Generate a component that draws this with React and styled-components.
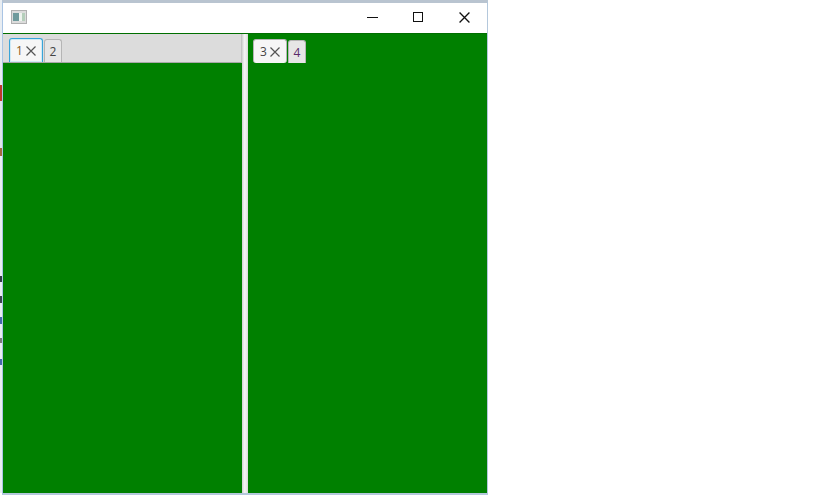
import React from "react";
import styled, { createGlobalStyle } from "styled-components";

const Global = createGlobalStyle`
  html, body { margin: 0; padding: 0; background: #fff; }
  body { font-family: "Open Sans", "Liberation Sans", sans-serif; }
`;

const Page = styled.div`
  width: 819px;
  height: 495px;
  display: flex;
  overflow: hidden;
  background: #fff;
`;

const Sliver = styled.div`
  width: 2px;
  height: 493px;
  display: flex;
  flex-direction: column;
  background: #e8edf2;
`;

const Spot = styled.div`
  height: ${(p) => p.$h}px;
  background: ${(p) => p.$c};
`;

const Win = styled.div`
  width: 486px;
  height: 495px;
  display: flex;
  flex-direction: column;
  box-sizing: border-box;
  border: 1px solid #b4c8dc;
  border-top: 3px solid #b9c4d0;
  border-left-color: #a9c4e4;
  border-bottom-width: 2px;
`;

const TitleBar = styled.div`
  height: 30px;
  box-sizing: border-box;
  flex: none;
  display: flex;
  align-items: center;
  justify-content: space-between;
  background: #fff;
  padding: 0 0 2px 8px;
`;

const WinButtons = styled.div`
  display: flex;
`;

const WinButton = styled.div`
  width: 46px;
  height: 28px;
  display: flex;
  align-items: center;
  justify-content: center;
`;

const Body = styled.div`
  flex: 1;
  display: flex;
  background: #008000;
  border-top: 1px solid #006f00;
`;

const LeftPane = styled.div`
  width: 239px;
  display: flex;
  flex-direction: column;
`;

const Header = styled.div`
  height: 29px;
  box-sizing: border-box;
  display: flex;
  align-items: flex-end;
  gap: 1px;
  padding-left: ${(p) => (p.$clear ? 5 : 6)}px;
  background: ${(p) => (p.$clear ? "transparent" : "#dcdcdc")};
  border-bottom: ${(p) => (p.$clear ? "0" : "1px solid #a8a8a8")};
  border-right: ${(p) => (p.$clear ? "0" : "1px solid #c4c4c4")};
`;

const Tab = styled.div`
  width: ${(p) => (p.$active ? 34 : 18)}px;
  height: ${(p) => (p.$active ? 24 : 23)}px;
  box-sizing: border-box;
  display: flex;
  align-items: center;
  justify-content: center;
  gap: 3px;
  font-size: 12px;
  color: ${(p) => p.$ink};
  background: ${(p) => (p.$active ? "#f6f6f6" : "#e6e6e6")};
  border: 1px solid ${(p) => (p.$focus ? "#39a4d8" : "#b5b5b5")};
  border-bottom: 0;
  border-radius: ${(p) => (p.$round ? "3px" : "3px 3px 0 0")};
  box-shadow: ${(p) => (p.$focus ? "inset 0 0 0 1px #cfeaf6" : "none")};
`;

const Divider = styled.div`
  width: 6px;
  background: linear-gradient(90deg, #cfcfcf, #f4f4f4 40%, #ececec 70%, #d8d8d8);
`;

const RightPane = styled.div`
  flex: 1;
`;

function AppIcon() {
  return (
    <svg width="16" height="14" viewBox="0 0 16 14">
      <rect x="0.5" y="0.5" width="15" height="13" fill="#dcdcdc" stroke="#b0b0b0" />
      <rect x="2" y="3" width="6" height="8" fill="#6f9a9c" />
      <rect x="8" y="3" width="3" height="8" fill="#eef3ee" />
      <rect x="11" y="3" width="3" height="8" fill="#b5cfbb" />
    </svg>
  );
}

function Close({ size = 10, color = "#555" }) {
  return (
    <svg width={size} height={size} viewBox="0 0 10 10">
      <path d="M0.5 0.5 9.5 9.5M9.5 0.5 0.5 9.5" stroke={color} strokeWidth="1.2" fill="none" />
    </svg>
  );
}

export default function App() {
  return (
    <Page>
      <Global />
      <Sliver>
        <Spot $h={85} $c="#e8edf2" />
        <Spot $h={16} $c="#c0392b" />
        <Spot $h={47} $c="#dfe5ea" />
        <Spot $h={8} $c="#a5673f" />
        <Spot $h={120} $c="#e8edf2" />
        <Spot $h={6} $c="#333b45" />
        <Spot $h={14} $c="#e8edf2" />
        <Spot $h={7} $c="#3c4450" />
        <Spot $h={14} $c="#e8edf2" />
        <Spot $h={7} $c="#4468a8" />
        <Spot $h={14} $c="#e8edf2" />
        <Spot $h={5} $c="#7a7a7a" />
        <Spot $h={16} $c="#e8edf2" />
        <Spot $h={6} $c="#4468a8" />
      </Sliver>
      <Win>
        <TitleBar>
          <AppIcon />
          <WinButtons>
            <WinButton>
              <svg width="11" height="11" viewBox="0 0 11 11">
                <path d="M0 5.5H11" stroke="#111" fill="none" />
              </svg>
            </WinButton>
            <WinButton>
              <svg width="10" height="10" viewBox="0 0 10 10">
                <rect x="0.5" y="0.5" width="9" height="9" stroke="#111" fill="none" />
              </svg>
            </WinButton>
            <WinButton>
              <Close size={11} color="#111" />
            </WinButton>
          </WinButtons>
        </TitleBar>
        <Body>
          <LeftPane>
            <Header>
              <Tab $active $focus $ink="#8a5a20">1 <Close /></Tab>
              <Tab $ink="#444">2</Tab>
            </Header>
          </LeftPane>
          <Divider />
          <RightPane>
            <Header $clear>
              <Tab $active $round $ink="#444">3 <Close /></Tab>
              <Tab $ink="#5a2a6a">4</Tab>
            </Header>
          </RightPane>
        </Body>
      </Win>
    </Page>
  );
}
